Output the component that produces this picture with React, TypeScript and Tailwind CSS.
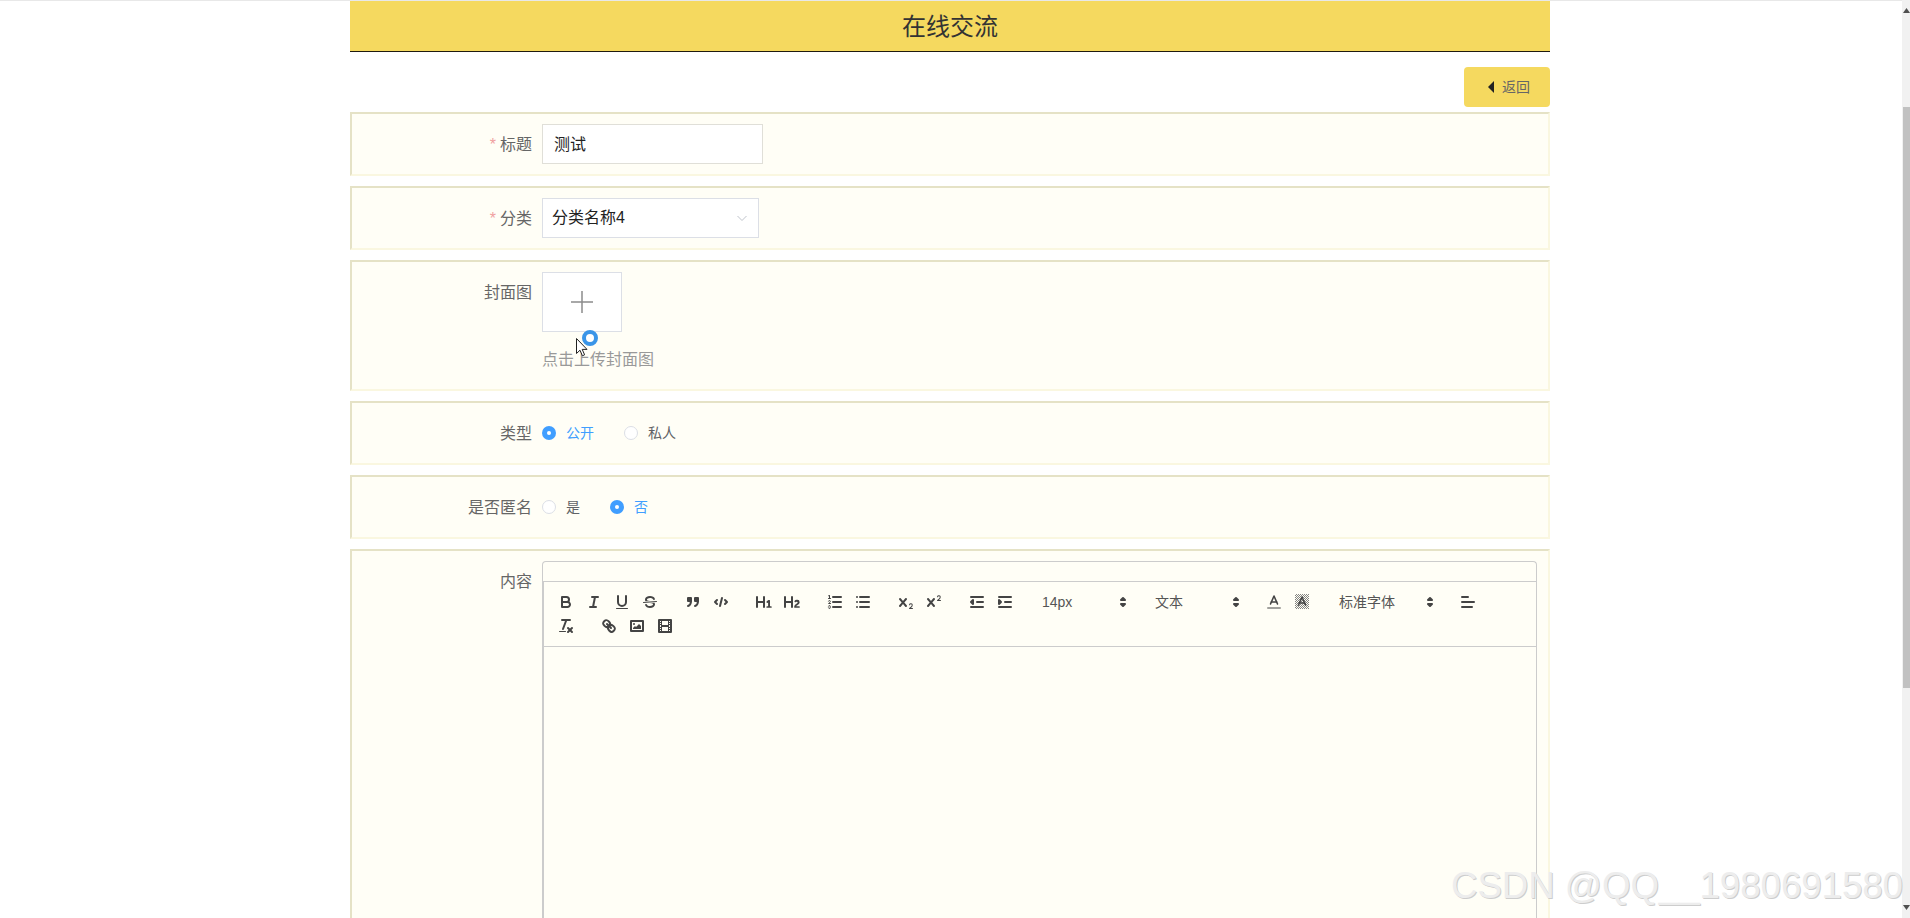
import React from 'react';

const font = "font-['Liberation_Sans','Noto_Sans_CJK_SC',sans-serif]";

const Ico = ({ children }: { children: React.ReactNode }) => (
  <button className="flex h-6 w-7 items-center justify-center">
    <svg viewBox="0 0 18 18" className="h-[18px] w-[18px]" fill="none" stroke="#444" strokeWidth={2} strokeLinecap="round" strokeLinejoin="round">
      {children}
    </svg>
  </button>
);

const Fill = (p: React.SVGProps<SVGPathElement>) => <path fill="#444" stroke="none" {...p} />;
const Thin = (p: React.SVGProps<SVGPathElement>) => <path strokeWidth={1} {...p} />;

const Picker = ({ label, width }: { label: string; width: string }) => (
  <div className={`mr-[15px] flex h-6 items-center justify-between pl-2 text-sm text-[#555] ${width}`}>
    <span>{label}</span>
    <svg viewBox="0 0 18 18" className="h-[18px] w-[18px]" fill="none" stroke="#444" strokeWidth={2} strokeLinejoin="round">
      <polygon points="7 11 9 13 11 11 7 11" />
      <polygon points="7 7 9 5 11 7 7 7" />
    </svg>
  </div>
);

const Group = ({ children }: { children: React.ReactNode }) => <div className="mr-[15px] flex">{children}</div>;

const Toolbar = () => (
  <div className="flex flex-wrap border border-l-2 border-[#ccc] px-2 py-2">
    <Group>
      <Ico>
        <path d="M5,4H9.5A2.5,2.5,0,0,1,12,6.5v0A2.5,2.5,0,0,1,9.5,9H5A0,0,0,0,1,5,9V4A0,0,0,0,1,5,4Z" />
        <path d="M5,9h5.5A2.5,2.5,0,0,1,13,11.5v0A2.5,2.5,0,0,1,10.5,14H5a0,0,0,0,1,0,0V9A0,0,0,0,1,5,9Z" />
      </Ico>
      <Ico>
        <line x1="7" x2="13" y1="4" y2="4" />
        <line x1="5" x2="11" y1="14" y2="14" />
        <line x1="8" x2="10" y1="14" y2="4" />
      </Ico>
      <Ico>
        <path d="M5,3V9a4.012,4.012,0,0,0,4,4H9a4.012,4.012,0,0,0,4-4V3" />
        <rect x="3" y="15" width="12" height="1" rx=".5" fill="#444" stroke="none" />
      </Ico>
      <Ico>
        <line x1="15.5" x2="2.5" y1="8.5" y2="9.5" strokeWidth={1} />
        <Fill d="M9.007,8C6.542,7.791,6,7.519,6,6.5,6,5.792,7.283,5,9,5c1.571,0,2.765.679,2.969,1.309a1,1,0,0,0,1.9-.617C13.356,4.106,11.354,3,9,3,6.2,3,4,4.538,4,6.5a3.2,3.2,0,0,0,.5,1.843Z" />
        <Fill d="M8.984,10C11.457,10.208,12,10.479,12,11.5c0,.708-1.283,1.5-3,1.5-1.571,0-2.765-.679-2.969-1.309a1,1,0,1,0-1.9.617C4.644,13.894,6.646,15,9,15c2.8,0,5-1.538,5-3.5a3.2,3.2,0,0,0-.5-1.843Z" />
      </Ico>
    </Group>
    <Group>
      <Ico>
        <rect x="4" y="5" width="3" height="3" fill="#444" />
        <rect x="11" y="5" width="3" height="3" fill="#444" />
        <path d="M7,8c0,4.031-3,5-3,5" />
        <path d="M14,8c0,4.031-3,5-3,5" />
      </Ico>
      <Ico>
        <polyline points="5 7 3 9 5 11" />
        <polyline points="13 7 15 9 13 11" />
        <line x1="10" x2="8" y1="5" y2="13" />
      </Ico>
    </Group>
    <Group>
      <Ico>
        <Fill d="M10,4V14a1,1,0,0,1-2,0V10H3v4a1,1,0,0,1-2,0V4A1,1,0,0,1,3,4V8H8V4a1,1,0,0,1,2,0Zm6.06787,9.209H14.98975V7.59863a.54085.54085,0,0,0-.605-.60547h-.62744a1.01119,1.01119,0,0,0-.748.29688L11.645,8.56641a.5435.5435,0,0,0-.022.8584l.28613.30762a.53861.53861,0,0,0,.84717.0332l.09912-.08789a1.2137,1.2137,0,0,0,.2417-.35254h.02246s-.01123.30859-.01123.60547V13.209H12.041a.54085.54085,0,0,0-.605.60547v.43945a.54085.54085,0,0,0,.605.60547h4.02686a.54085.54085,0,0,0,.605-.60547v-.43945A.54085.54085,0,0,0,16.06787,13.209Z" />
      </Ico>
      <Ico>
        <Fill d="M16.73975,13.81445v.43945a.54085.54085,0,0,1-.605.60547H11.855a.58392.58392,0,0,1-.64893-.60547V14.0127c0-2.90527,3.39941-3.42187,3.39941-4.55469a.77675.77675,0,0,0-.84717-.78125,1.17684,1.17684,0,0,0-.83594.38477c-.2749.26367-.561.374-.85791.13184l-.4292-.34082c-.30811-.24219-.38525-.51758-.1543-.81445a2.97155,2.97155,0,0,1,2.45361-1.17676,2.45393,2.45393,0,0,1,2.68408,2.40918c0,2.45312-3.1792,2.92676-3.27832,3.93848h2.79443A.54085.54085,0,0,1,16.73975,13.81445ZM9,3A.99974.99974,0,0,0,8,4V8H3V4A1,1,0,0,0,1,4V14a1,1,0,0,0,2,0V10H8v4a1,1,0,0,0,2,0V4A.99974.99974,0,0,0,9,3Z" />
      </Ico>
    </Group>
    <Group>
      <Ico>
        <line x1="7" x2="15" y1="4" y2="4" />
        <line x1="7" x2="15" y1="9" y2="9" />
        <line x1="7" x2="15" y1="14" y2="14" />
        <line x1="2.5" x2="4.5" y1="5.5" y2="5.5" strokeWidth={1} />
        <Fill d="M3.5,6A0.5,0.5,0,0,1,3,5.5V3.085l-0.276.138A0.5,0.5,0,0,1,2.053,3c-0.124-.247-0.023-0.324.224-0.447l1-.5A0.5,0.5,0,0,1,4,2.5v3A0.5,0.5,0,0,1,3.5,6Z" />
        <Thin d="M4.5,10.5h-2c0-.234,1.85-1.076,1.85-2.234A0.959,0.959,0,0,0,2.5,8.156" />
        <Thin d="M2.5,14.846a0.959,0.959,0,0,0,1.85-.109A0.7,0.7,0,0,0,3.75,14a0.688,0.688,0,0,0,.6-0.736,0.959,0.959,0,0,0-1.85-.109" />
      </Ico>
      <Ico>
        <line x1="6" x2="15" y1="4" y2="4" />
        <line x1="6" x2="15" y1="9" y2="9" />
        <line x1="6" x2="15" y1="14" y2="14" />
        <line x1="3" x2="3" y1="4" y2="4" />
        <line x1="3" x2="3" y1="9" y2="9" />
        <line x1="3" x2="3" y1="14" y2="14" />
      </Ico>
    </Group>
    <Group>
      <Ico>
        <Fill d="M15.5,15H13.861a3.858,3.858,0,0,0,1.914-2.975,1.8,1.8,0,0,0-1.6-1.751A1.921,1.921,0,0,0,12.021,11.7a0.50013,0.50013,0,1,0,.957.291h0a0.914,0.914,0,0,1,1.053-.725,0.81,0.81,0,0,1,.744.762c0,1.076-1.16971,1.86982-1.93971,2.43082A1.45639,1.45639,0,0,0,12,15.5a0.5,0.5,0,0,0,.5.5h3A0.5,0.5,0,0,0,15.5,15Z" />
        <Fill d="M9.65,5.241a1,1,0,0,0-1.409.108L6,7.964,3.759,5.349A1,1,0,0,0,2.241,6.651L4.684,9.5,2.241,12.349a1,1,0,0,0,1.519,1.3L6,11.036l2.241,2.616a1,1,0,0,0,1.519-1.3L7.316,9.5,9.759,6.651A1,1,0,0,0,9.65,5.241Z" />
      </Ico>
      <Ico>
        <Fill d="M15.5,7H13.861a4.015,4.015,0,0,0,1.914-2.975,1.8,1.8,0,0,0-1.6-1.751A1.922,1.922,0,0,0,12.021,3.7a0.5,0.5,0,1,0,.957.291,0.917,0.917,0,0,1,1.053-.725,0.81,0.81,0,0,1,.744.762c0,1.077-1.164,1.925-1.934,2.486A1.423,1.423,0,0,0,12,7.5a0.5,0.5,0,0,0,.5.5h3A0.5,0.5,0,0,0,15.5,7Z" />
        <Fill d="M9.651,5.241a1,1,0,0,0-1.41.108L6,7.964,3.759,5.349a1,1,0,1,0-1.519,1.3L4.683,9.5,2.241,12.35a1,1,0,1,0,1.519,1.3L6,11.036l2.241,2.616a1,1,0,0,0,1.519-1.3L7.317,9.5,9.759,6.651A1,1,0,0,0,9.651,5.241Z" />
      </Ico>
    </Group>
    <Group>
      <Ico>
        <line x1="3" x2="15" y1="14" y2="14" />
        <line x1="3" x2="15" y1="4" y2="4" />
        <line x1="9" x2="15" y1="9" y2="9" />
        <polyline points="5 7 5 11 3 9 5 7" />
      </Ico>
      <Ico>
        <line x1="3" x2="15" y1="14" y2="14" />
        <line x1="3" x2="15" y1="4" y2="4" />
        <line x1="9" x2="15" y1="9" y2="9" />
        <polyline points="3 7 3 11 5 9 3 7" fill="#444" />
      </Ico>
    </Group>
    <Picker label="14px" width="w-[98px]" />
    <Picker label="文本" width="w-[98px]" />
    <Group>
      <Ico>
        <line x1="3" x2="15" y1="15" y2="15" opacity={0.5} />
        <polyline points="5.5 11 9 3 12.5 11" strokeWidth={1.6} />
        <line x1="11.63" x2="6.38" y1="9" y2="9" strokeWidth={1.6} />
      </Ico>
      <Ico>
        <defs>
          <pattern id="hatch" width="2" height="2" patternUnits="userSpaceOnUse">
            <rect width="1" height="1" fill="#444" stroke="none" />
            <rect x="1" y="1" width="1" height="1" fill="#444" stroke="none" />
          </pattern>
        </defs>
        <rect x="2" y="1" width="14" height="15" fill="url(#hatch)" stroke="none" opacity={0.65} />
        <polyline points="5.5 12 9 4 12.5 12" strokeWidth={1.6} />
        <line x1="11.63" x2="6.38" y1="10" y2="10" strokeWidth={1.6} />
      </Ico>
    </Group>
    <Picker label="标准字体" width="w-[108px]" />
    <Group>
      <Ico>
        <line x1="3" x2="15" y1="9" y2="9" />
        <line x1="3" x2="13" y1="14" y2="14" />
        <line x1="3" x2="9" y1="4" y2="4" />
      </Ico>
    </Group>
    <Group>
      <Ico>
        <line x1="5" x2="13" y1="3" y2="3" />
        <line x1="6" x2="9.35" y1="12" y2="3" />
        <line x1="11" x2="15" y1="11" y2="15" />
        <line x1="15" x2="11" y1="11" y2="15" />
        <rect x="2" y="14" width="7" height="1" rx=".5" fill="#444" stroke="none" />
      </Ico>
    </Group>
    <Group>
      <Ico>
        <line x1="7" x2="11" y1="7" y2="11" />
        <path d="M8.9,4.577a3.476,3.476,0,0,1,.36,4.679A3.476,3.476,0,0,1,4.577,8.9C3.185,7.5,2.035,6.4,4.217,4.217S7.5,3.185,8.9,4.577Z" />
        <path d="M13.423,9.1a3.476,3.476,0,0,0-4.679-.36,3.476,3.476,0,0,0,.36,4.679c1.392,1.392,2.5,2.542,4.679.36S14.815,10.5,13.423,9.1Z" />
      </Ico>
      <Ico>
        <rect x="3" y="4" width="12" height="10" />
        <circle cx="6" cy="7" r="1" fill="#444" stroke="none" />
        <polyline points="5 12 5 11 7 9 8 10 11 7 13 9 13 12 5 12" fill="#444" stroke="none" />
      </Ico>
      <Ico>
        <rect x="3" y="3" width="12" height="12" />
        <g fill="#444" stroke="none">
          <rect x="5" y="3" width="1" height="12" />
          <rect x="12" y="3" width="1" height="12" />
          <rect x="5" y="8" width="8" height="2" />
          <rect x="3" y="5" width="3" height="1" />
          <rect x="3" y="7" width="3" height="1" />
          <rect x="3" y="10" width="3" height="1" />
          <rect x="3" y="12" width="3" height="1" />
          <rect x="12" y="5" width="3" height="1" />
          <rect x="12" y="7" width="3" height="1" />
          <rect x="12" y="10" width="3" height="1" />
          <rect x="12" y="12" width="3" height="1" />
        </g>
      </Ico>
    </Group>
  </div>
);

const Row = ({ label, required, children, className = 'h-16' }: { label: string; required?: boolean; children: React.ReactNode; className?: string }) => (
  <div className={`mb-[10px] flex border-2 border-b-[#faf7e0] border-l-[#e5e2c6] border-r-[#faf7e0] border-t-[#e5e2c6] bg-[#fffef6] py-[10px] ${className}`}>
    <div className="flex h-10 w-[180px] shrink-0 items-center justify-end pt-[2px] text-base text-[#666]">
      {required && <span className="mr-1 text-[#f0a0a0]">*</span>}
      {label}
    </div>
    <div className="ml-[10px] min-w-0 flex-1">{children}</div>
  </div>
);

const Radio = ({ label, checked, className = 'mr-[30px]' }: { label: string; checked?: boolean; className?: string }) => (
  <div className={`flex items-center gap-[10px] text-sm ${className} ${checked ? 'text-[#409eff]' : 'text-[#606266]'}`}>
    {checked ? (
      <span className="flex h-[14px] w-[14px] items-center justify-center rounded-full bg-[#409eff]">
        <span className="h-1 w-1 rounded-full bg-white" />
      </span>
    ) : (
      <span className="h-[14px] w-[14px] rounded-full border border-[#dcdfe6] bg-white" />
    )}
    {label}
  </div>
);

export default function App() {
  return (
    <div className={`relative flex h-[918px] w-full overflow-hidden bg-white ${font}`}>
      <div className="min-w-0 flex-1 border-t border-[#e8e8e8]">
        <div className="ml-[350px] w-[1200px]">
          <div className="flex h-[51px] items-center justify-center border-b border-[#1f1a10] bg-[#f5d95f] pt-px text-2xl text-[#333]">
            在线交流
          </div>
          <div className="flex justify-end pb-[5px] pt-[15px]">
            <button className="flex h-10 w-[86px] items-center justify-center gap-2 rounded bg-[#f5d95f] pl-1 text-sm text-[#666]">
              <svg viewBox="0 0 6 12" className="h-3 w-[6px]" fill="#222">
                <path d="M6 0v12L0 6z" />
              </svg>
              返回
            </button>
          </div>

          <Row label="标题" required>
            <input
              readOnly
              value="测试"
              className="h-10 w-[221px] border border-[#e0dfd8] bg-white px-[11px] pb-[2px] text-base text-[#222] outline-none"
            />
          </Row>

          <Row label="分类" required>
            <div className="flex h-10 w-[217px] items-center justify-between border border-[#dcdfe6] bg-white pl-[9px] pr-[9px] text-base text-[#222]">
              分类名称4
              <svg viewBox="0 0 14 14" className="h-[14px] w-[14px]" fill="none" stroke="#c0c4cc" strokeWidth={1}>
                <path d="M2.5 5l4.5 4.5L11.5 5" />
              </svg>
            </div>
          </Row>

          <Row label="封面图" className="h-[131px]">
            <div className="flex h-[60px] w-20 items-center justify-center border border-[#dcdfe6] bg-white">
              <svg viewBox="0 0 22 22" className="h-[22px] w-[22px]" stroke="#8c8c8c" strokeWidth={1.5}>
                <path d="M0 11h22M11 0v22" />
              </svg>
            </div>
            <div className="mt-2 h-[39px] text-base leading-10 text-[#999]">点击上传封面图</div>
          </Row>

          <Row label="类型">
            <div className="flex h-10 items-center">
              <Radio label="公开" checked />
              <Radio label="私人" />
            </div>
          </Row>

          <Row label="是否匿名">
            <div className="flex h-10 items-center">
              <Radio label="是" />
              <Radio label="否" checked />
            </div>
          </Row>

          <Row label="内容" className="h-[600px]">
            <div className="mr-[11px]">
              <div className="h-5 rounded-t border border-b-0 border-[#ccc]" />
              <Toolbar />
              <div className="h-[500px] border-l-2 border-r border-[#ccc]" />
            </div>
          </Row>
        </div>
      </div>

      <div className="flex w-2 shrink-0 flex-col items-end justify-between bg-[#f1f1f1]">
        <div className="flex w-[7px] flex-col">
          <svg viewBox="0 0 7 5" className="mt-2 h-[5px] w-[7px]" fill="#505050">
            <path d="M3.5 0L7 5H0z" />
          </svg>
          <div className="mt-[94px] h-[581px] bg-[#c1c1c1]" />
        </div>
        <svg viewBox="0 0 7 5" className="mb-2 h-[5px] w-[7px]" fill="#505050">
          <path d="M0 0h7L3.5 5z" />
        </svg>
      </div>

      <div className="absolute left-[1451px] top-[866px] whitespace-nowrap text-[36.6px] leading-10 text-[#ededed] [text-shadow:1px_1px_0_#cdcdcd]">
        CSDN @QQ__1980691580
      </div>

      <div className="absolute left-[582px] top-[330px] h-4 w-4 rounded-full border-4 border-[#3a95e8] bg-white" />
      <svg viewBox="0 0 12 19" className="absolute left-[576px] top-[338px] h-[19px] w-3">
        <path d="M.5.5v15l3.5-3.3 2.4 5.6 2.2-1-2.4-5.4h4.8z" fill="#fff" stroke="#222" strokeWidth={1} />
      </svg>
    </div>
  );
}
